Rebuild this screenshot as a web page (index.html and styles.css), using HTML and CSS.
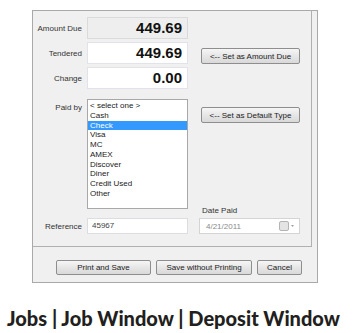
FILE: index.html
```html
<!DOCTYPE html>
<html lang="en">
<head>
    <meta charset="UTF-8">
    <meta name="viewport" content="width=device-width, initial-scale=1.0">
    <title>Deposit Window</title>
    <link rel="stylesheet" href="styles.css">
</head>
<body>

<div class="window">
    <!-- Payment details -->
    <div class="panel">
        <label class="lbl">Amount Due</label>
        <div class="amount readonly">449.69</div>
        <div></div>

        <label class="lbl">Tendered</label>
        <div class="amount">449.69</div>
        <div class="side"><button class="btn side-btn">&lt;-- Set as Amount Due</button></div>

        <label class="lbl">Change</label>
        <div class="amount">0.00</div>
        <div></div>

        <label class="lbl lbl-top">Paid by</label>
        <div class="listbox">
            <div class="opt">&lt; select one &gt;</div>
            <div class="opt">Cash</div>
            <div class="opt selected">Check</div>
            <div class="opt">Visa</div>
            <div class="opt">MC</div>
            <div class="opt">AMEX</div>
            <div class="opt">Discover</div>
            <div class="opt">Diner</div>
            <div class="opt">Credit Used</div>
            <div class="opt">Other</div>
        </div>
        <div class="side side-col">
            <button class="btn side-btn">&lt;-- Set as Default Type</button>
            <span class="date-lbl">Date Paid</span>
        </div>

        <label class="lbl ref-row">Reference</label>
        <div class="field ref-row">45967</div>
        <div class="side ref-row">
            <div class="date">
                <span>4/21/2011</span>
                <svg width="16" height="10" viewBox="0 0 16 10">
                    <rect x="0.5" y="0.5" width="9" height="9" rx="1.5" fill="#e4e4e4" stroke="#b4b4b4"/>
                    <path d="M12 4 L15 4 L13.5 6 Z" fill="#a0a0a0"/>
                </svg>
            </div>
        </div>
    </div>

    <div class="footer">
        <button class="btn foot-btn w-print">Print and Save</button>
        <button class="btn foot-btn w-save">Save without Printing</button>
        <button class="btn foot-btn w-cancel">Cancel</button>
    </div>
</div>

<h2 class="caption">Jobs | Job Window | Deposit Window</h2>

</body>
</html>
```

FILE: styles.css
```css
body {
    margin: 0;
    background-color: #fff;
    font-family: "Liberation Sans", Arial, sans-serif;
    font-size: 8px;
    color: #333;
}
.window {
    margin: 10px 0 0 32px;
    width: 284px;
    height: 271px;
    border: 1px solid #a9a9a9;
    background-color: #f0f0f0;
}
.panel {
    width: 279px;
    height: 236px;
    box-sizing: border-box;
    padding-top: 6px;
    border-right: 1px solid #b0b0b0;
    border-bottom: 1px solid #b0b0b0;
    display: grid;
    grid-template-columns: 49px 101px 1fr;
    grid-template-rows: 22px 22px 22px 110px 16px;
    column-gap: 5px;
    row-gap: 3px;
}
.lbl {
    display: flex;
    align-items: center;
    justify-content: flex-end;
    color: #333;
}
.lbl-top {
    align-items: flex-start;
    padding-top: 11px;
}
.amount {
    box-sizing: border-box;
    background-color: #fff;
    border: 1px solid #e2e3ea;
    font-size: 15px;
    font-weight: bold;
    color: #111;
    text-align: right;
    padding-right: 5px;
    line-height: 20px;
}
.amount.readonly {
    background-color: #eeeeee;
    border-color: #dadada;
}
.side {
    padding-left: 8px;
    display: flex;
    align-items: flex-end;
}
.side-col {
    flex-direction: column;
    align-items: flex-start;
    justify-content: space-between;
}
.btn {
    font-family: "Liberation Sans", Arial, sans-serif;
    font-size: 8px;
    color: #222;
    box-sizing: border-box;
    height: 16px;
    padding: 0;
    border: 1px solid #8e8e8e;
    border-radius: 2px;
    background: linear-gradient(#f6f6f6, #e6e6e6 50%, #d9d9d9);
}
.side-btn {
    width: 99px;
}
.listbox {
    box-sizing: border-box;
    background-color: #fff;
    border: 1px solid #a8a8a8;
    padding-top: 1px;
    margin-top: 7px;
    margin-bottom: -7px;
}
.opt {
    height: 9.75px;
    line-height: 9.75px;
    padding-left: 2px;
    color: #222;
}
.opt.selected {
    background-color: #3399ff;
    color: #fff;
}
.side-col .side-btn {
    margin-top: 15px;
}
.date-lbl {
    margin-left: 1px;
    margin-bottom: -13px;
    color: #333;
}
.ref-row {
    margin-top: 13px;
    margin-bottom: -13px;
}
.field {
    box-sizing: border-box;
    background-color: #fff;
    border: 1px solid #dcdde3;
    padding-left: 4px;
    line-height: 14px;
    color: #444;
}
.side.ref-row {
    padding-left: 6px;
}
.date {
    box-sizing: border-box;
    width: 101px;
    height: 16px;
    background-color: #fff;
    border: 1px solid #d4d4d4;
    padding: 0 4px 0 6px;
    display: flex;
    align-items: center;
    justify-content: space-between;
    color: #8a8a8a;
}
.footer {
    display: flex;
    justify-content: flex-end;
    gap: 5px;
    padding: 13px 15px 0 0;
}
.foot-btn {
    height: 15px;
}
.w-print {
    width: 95px;
}
.w-save {
    width: 96px;
}
.w-cancel {
    width: 45px;
}
.caption {
    margin: 23px 0 0 0;
    padding-left: 7px;
    font-family: Lato, "Liberation Sans", sans-serif;
    font-weight: 900;
    font-size: 20px;
    color: #231f20;
}
```
